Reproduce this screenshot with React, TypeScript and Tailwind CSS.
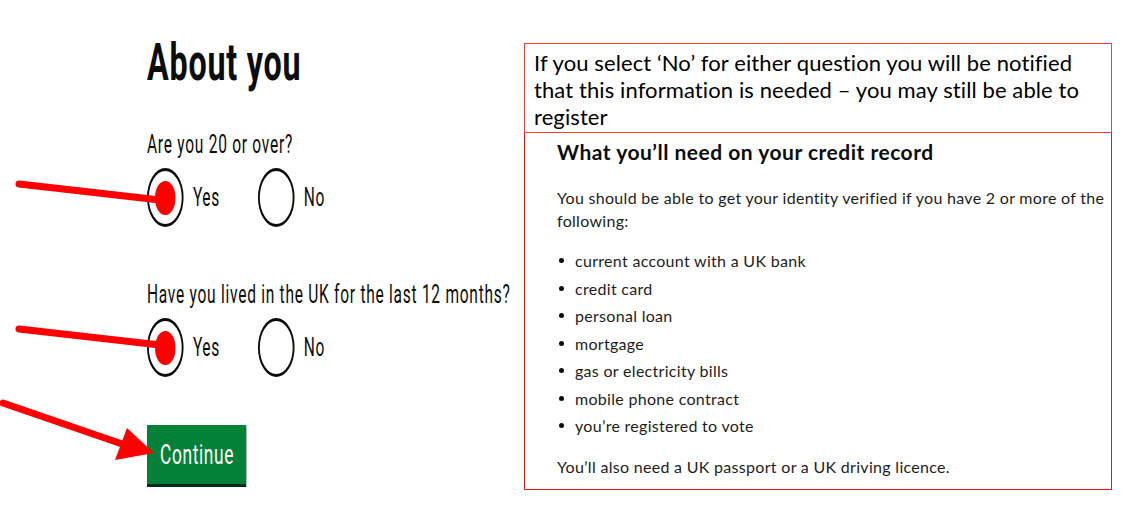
import React from 'react';

const bullets = [
  'current account with a UK bank',
  'credit card',
  'personal loan',
  'mortgage',
  'gas or electricity bills',
  'mobile phone contract',
  'you\u2019re registered to vote',
];

function Radio({label, checked}: {label: string; checked?: boolean}) {
  return (
    <div className="flex items-center gap-[15px]">
      <div className="w-[59px] h-[59px] rounded-full border-[3px] border-[#0b0c0c] flex items-center justify-center">
        {checked && <div className="w-[33px] h-[34px] rounded-full bg-[#ff0000]" />}
      </div>
      <span className="text-[25px] leading-[25px] tracking-[1px]">{label}</span>
    </div>
  );
}

function Question({text}: {text: string}) {
  return (
    <div>
      <p className="text-[25px] leading-[25px] tracking-[1.2px] whitespace-nowrap">{text}</p>
      <div className="flex mt-[11px]">
        <div className="w-[179px]">
          <Radio label="Yes" checked />
        </div>
        <Radio label="No" />
      </div>
    </div>
  );
}

export default function App() {
  return (
    <div className="relative w-[1123px] h-[523px] bg-white overflow-hidden text-[#0b0c0c]">
      <div className="flex">
        {/* form, squeezed sideways like the screenshot */}
        <div className="w-[524px] pl-[147px] pt-[37px] shrink-0">
          <div className="origin-top-left scale-x-[0.62] w-[640px] font-['Roboto',sans-serif]">
            <h1 className="text-[52px] leading-[52px] font-bold tracking-[1.3px]">About you</h1>
            <div className="mt-[43px]">
              <Question text="Are you 20 or over?" />
            </div>
            <div className="mt-[55px]">
              <Question text="Have you lived in the UK for the last 12 months?" />
            </div>
            <button className="mt-[48px] h-[59px] w-[160px] flex items-center px-[21px] bg-[#038139] text-white text-[28px] tracking-[1px] shadow-[0_3px_0_#002d18]">
              Continue
            </button>
          </div>
        </div>

        {/* notes */}
        <div className="w-[588px] pt-[43px] shrink-0 font-['Lato',sans-serif]">
          <div className="h-[90px] border border-[#ff3b3b] pl-[9px] pr-[10px] pt-[5px] text-[22px] leading-[27px] tracking-[0.1px] text-black">
            If you select ‘No’ for either question you will be notified that this information is needed – you may still be able to register
          </div>
          <div className="h-[357px] border-x border-b border-[#ee1111] pl-[32px] pt-[7px] text-[#0b0c0c]">
            <h2 className="text-[21px] leading-[24px] font-bold tracking-[0.5px]">What you’ll need on your credit record</h2>
            <p className="mt-[22px] text-[16px] leading-[23px] tracking-[0.3px] text-[#1d1d1d]">
              You should be able to get your identity verified if you have 2 or more of the following:
            </p>
            <ul className="mt-[15px] text-[16px] leading-[27.5px] tracking-[0.3px] text-[#1d1d1d]">
              {bullets.map((b) => (
                <li key={b} className="flex items-center">
                  <span className="ml-[2px] mr-[11px] w-[5px] h-[5px] rounded-full bg-[#0b0c0c]" />
                  {b}
                </li>
              ))}
            </ul>
            <p className="mt-[15px] text-[16px] leading-[23px] tracking-[0.3px] text-[#1d1d1d]">
              You’ll also need a UK passport or a UK driving licence.
            </p>
          </div>
        </div>
      </div>

      {/* red annotation arrows */}
      <svg className="absolute inset-0 pointer-events-none" width="1123" height="523" viewBox="0 0 1123 523">
        <line x1="19" y1="184" x2="160" y2="200" stroke="#ff0000" strokeWidth="7" strokeLinecap="round" />
        <line x1="19" y1="329" x2="160" y2="345" stroke="#ff0000" strokeWidth="7" strokeLinecap="round" />
        <line x1="3" y1="403" x2="128" y2="446" stroke="#ff0000" strokeWidth="7" strokeLinecap="round" />
        <polygon points="127,428 154,453 115,460" fill="#ff0000" />
      </svg>
    </div>
  );
}
